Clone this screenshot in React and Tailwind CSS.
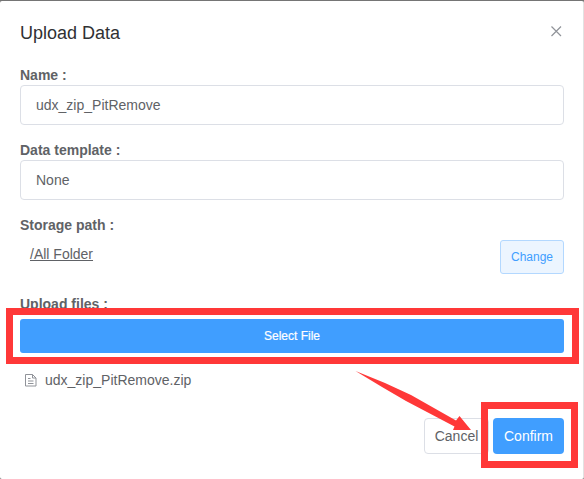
function Label({ children }) {
  return <div className="h-5 text-sm leading-5 font-bold whitespace-nowrap text-[#606266]">{children}</div>;
}

function Field({ label, value }) {
  return (
    <div className="mb-[15px]">
      <Label>{label}</Label>
      <div className="flex h-10 items-center rounded border border-[#dcdfe6] bg-white px-[15px] text-sm text-[#606266]">
        {value}
      </div>
    </div>
  );
}

export default function App() {
  return (
    <div className="relative h-[479px] w-[584px] overflow-hidden bg-[#757575] pt-px font-['Liberation_Sans',Arial,sans-serif]">
      <div className="h-[478px] rounded-xs border-r border-[#e2e2e2] bg-white px-5 pr-[19px]">
        <header className="flex h-16 items-start justify-between pt-5">
          <h1 className="text-lg leading-6 text-[#303133]">Upload Data</h1>
          <svg className="mt-[4px] mr-[2px] h-3 w-3" viewBox="0 0 12 12" fill="none" stroke="#909399" strokeWidth="1.2">
            <path d="M1.5 1.5 11 11M11 1.5 1.5 11" />
          </svg>
        </header>

        <Field label="Name :" value="udx_zip_PitRemove" />
        <Field label="Data template :" value="None" />

        <Label>Storage path :</Label>
        <div className="flex h-[59px] items-start justify-between pt-[5px]">
          <span className="mt-1 ml-[10px] text-sm leading-5 text-[#606266] underline">/All Folder</span>
          <button className="h-[34px] w-16 rounded-[3px] border border-[#b3d8ff] bg-[#ecf5ff] text-xs text-[#409eff]">
            Change
          </button>
        </div>

        <Label>Upload files :</Label>
        <button className="mt-[5px] block h-[34px] w-full rounded-[3px] bg-[#409eff] text-xs text-white [-webkit-text-stroke:0.2px_white]">
          Select File
        </button>

        <div className="mt-[17px] flex h-5 items-center text-sm text-[#606266]">
          <svg className="mr-[7px] ml-[5px] h-[13px] w-[13px]" viewBox="0 0 13 13" fill="none" stroke="#909399">
            <path d="M.5.5H7.5L11 4V12H.5ZM7.5 .5V4H11M3 4.5H5.5M3 7H8.5M3 9.5H8.5" />
          </svg>
          udx_zip_PitRemove.zip
        </div>

        <footer className="mt-7 flex justify-end gap-1">
          <button className="h-9 w-[65px] rounded border border-[#dcdfe6] bg-white text-sm text-[#606266]">Cancel</button>
          <button className="h-9 w-[71px] rounded bg-[#409eff] text-sm text-white">Confirm</button>
        </footer>
      </div>

      <div className="absolute top-[308px] left-[6px] h-[56px] w-[573px] border-7 border-[#ff3838]" />
      <div className="absolute top-[402px] left-[481px] h-[66px] w-[97px] border-7 border-[#ff3838]" />
      <svg className="absolute top-[365px] left-[350px] h-[70px] w-[125px]" viewBox="350 365 125 70" fill="#ff3838">
        <path d="M355.5 371 385 383 411 395 456 420.5 459.5 416 471 430H453L454.5 426.5 406 401 382 387Z" />
      </svg>
    </div>
  );
}
